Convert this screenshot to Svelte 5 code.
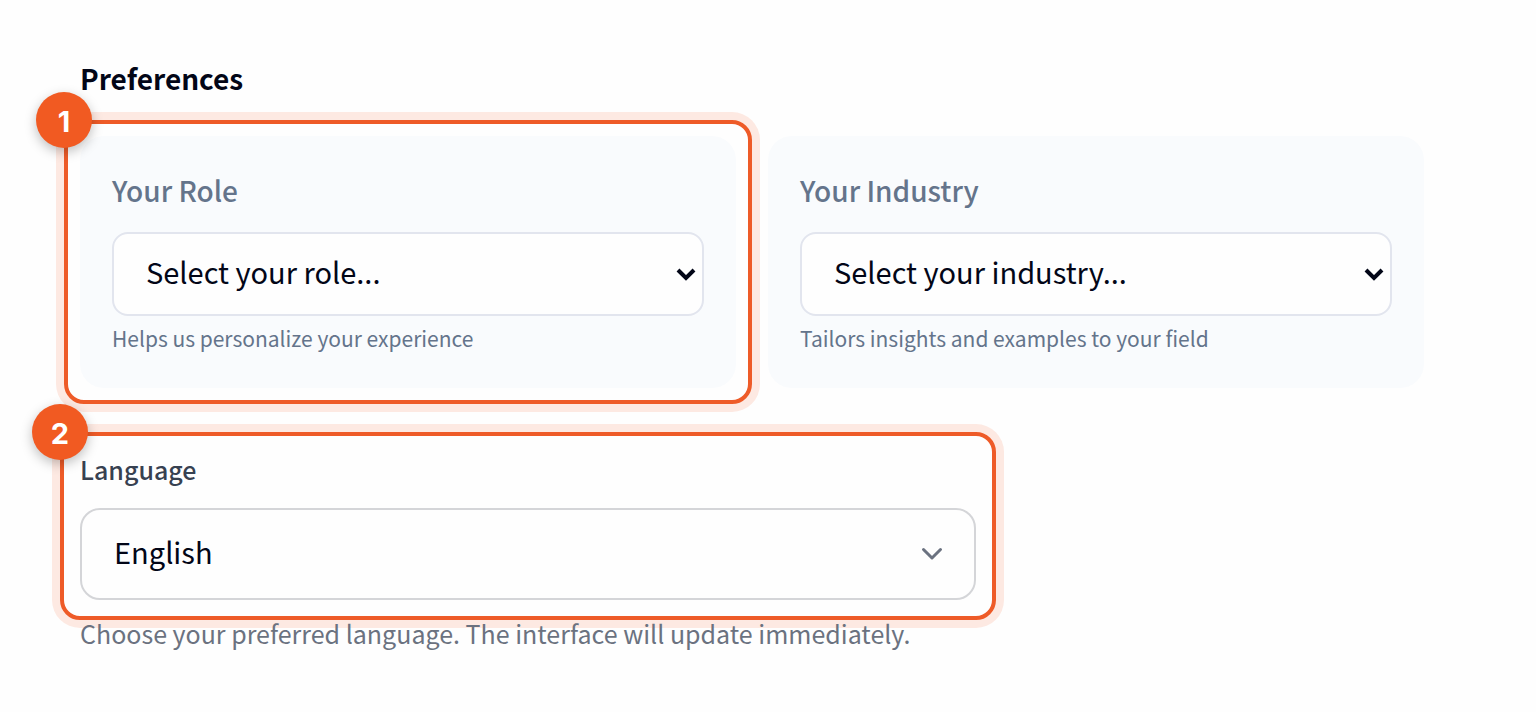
<script lang="ts">
	interface Field {
		id: string;
		label: string;
		placeholder: string;
		hint: string;
		options: string[];
		step?: number;
	}

	const fields: Field[] = [
		{
			id: 'role',
			label: 'Your Role',
			placeholder: 'Select your role...',
			hint: 'Helps us personalize your experience',
			options: ['Designer', 'Engineer', 'Manager'],
			step: 1,
		},
		{
			id: 'industry',
			label: 'Your Industry',
			placeholder: 'Select your industry...',
			hint: 'Tailors insights and examples to your field',
			options: ['Education', 'Finance', 'Technology'],
		},
	];

	let values: Record<string, string> = $state({ role: '', industry: '' });
	let language = $state('en');
</script>

{#snippet callout(step: number)}
	<div class="callout">
		<span class="badge">{step}</span>
	</div>
{/snippet}

<main class="preferences">
	<h2 class="heading">Preferences</h2>

	<div class="cards">
		{#each fields as field (field.id)}
			<section class="card">
				<label class="card-label" for={field.id}>{field.label}</label>

				<div class="control">
					<select class="select" id={field.id} bind:value={values[field.id]}>
						<option value="">{field.placeholder}</option>
						{#each field.options as option}
							<option value={option}>{option}</option>
						{/each}
					</select>

					<svg class="arrow" viewBox="0 0 20 14" fill="none">
						<path stroke="currentColor" stroke-width="4" d="m2 2 8 8 8-8" />
					</svg>
				</div>

				<p class="hint">{field.hint}</p>

				{#if field.step}
					{@render callout(field.step)}
				{/if}
			</section>
		{/each}
	</div>

	<div class="language">
		<label class="language-label" for="language">Language</label>

		<div class="control">
			<select class="select large" id="language" bind:value={language}>
				<option value="en">English</option>
				<option value="fr">Français</option>
				<option value="de">Deutsch</option>
			</select>

			<svg class="chevron" viewBox="0 0 24 16" fill="none">
				<path
					stroke="currentColor"
					stroke-linecap="round"
					stroke-linejoin="round"
					stroke-width="3"
					d="m3.5 3.500 8.500 8.500 8.500-8.500"
				/>
			</svg>
		</div>

		{@render callout(2)}
	</div>

	<p class="note">Choose your preferred language. The interface will update immediately.</p>
</main>

<style>
	:global(body) {
		margin: 0;
		background: #fefefe;
	}

	.preferences {
		padding: 56px 112px 56px 80px;
		color: #020617;
		font-size: 28px;
		line-height: 44px;
		font-family: 'Noto Sans CJK SC', 'Noto Sans', sans-serif;
	}

	.heading {
		margin: 0 0 36px;
		font-weight: 700;
		font-size: 28px;
	}

	.cards {
		display: grid;
		grid-template-columns: 1fr 1fr;
		gap: 32px;
	}

	.card {
		position: relative;
		border-radius: 24px;
		background: #f9fbfd;
		padding: 32px 32px 36px;
	}

	.card-label {
		display: block;
		margin-bottom: 20px;
		color: #64748b;
		font-weight: 500;
	}

	.control {
		position: relative;
	}

	.select {
		display: block;
		appearance: none;
		box-sizing: border-box;
		margin: 0;
		border: 2px solid #e2e5ee;
		border-radius: 16px;
		background: #fefefe;
		padding: 0 64px 6px 32px;
		width: 100%;
		height: 84px;
		color: inherit;
		font-size: 29px;
		font-family: inherit;

		&.large {
			border-color: #d4d5d8;
			border-radius: 20px;
			height: 92px;
		}
	}

	.arrow {
		position: absolute;
		top: 36px;
		right: 8px;
		width: 20px;
		height: 14px;
		pointer-events: none;
	}

	.chevron {
		position: absolute;
		top: 38px;
		right: 32px;
		width: 24px;
		height: 16px;
		color: #6b7280;
		pointer-events: none;
	}

	.hint {
		margin: 8px 0 0;
		color: #64748b;
		font-size: 21px;
		line-height: 28px;
	}

	.language {
		position: relative;
		margin-top: 64px;
		max-width: 896px;
	}

	.language-label {
		display: block;
		margin-bottom: 22px;
		color: #374151;
		font-weight: 500;
		font-size: 25px;
		line-height: 34px;
	}

	.note {
		position: relative;
		margin: 16px 0 0;
		color: #6b7280;
		font-size: 25px;
		line-height: 34px;
	}

	.callout {
		position: absolute;
		inset: -16px;
		box-shadow: 0 0 0 8px #fde9e2;
		border: 4px solid #ee5b28;
		border-radius: 20px;
		pointer-events: none;

		.language & {
			inset: -20px;
		}
	}

	.badge {
		display: flex;
		position: absolute;
		top: -32px;
		left: -32px;
		justify-content: center;
		align-items: center;
		box-sizing: border-box;
		box-shadow: 0 4px 12px rgb(0 0 0 / 0.25);
		border-radius: 50%;
		background: #f15a22;
		padding-top: 4px;
		width: 56px;
		height: 56px;
		color: #ffffff;
		font-weight: 700;
		font-size: 29px;
		font-family: Inter, sans-serif;
	}
</style>
